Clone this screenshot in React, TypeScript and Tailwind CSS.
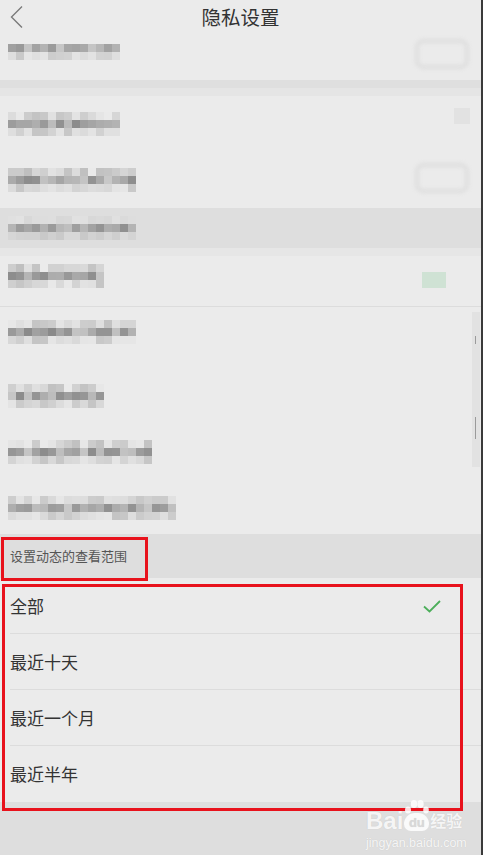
import React from 'react';

const cjk = { fontFamily: '"Noto Sans CJK SC", "Noto Sans", sans-serif' };

// pixelated (mosaic) placeholder for the blurred text in the screenshot
const Mosaic: React.FC<{ cells: number; seed: number; rows?: [number, number][] }> = ({
  cells,
  seed,
  rows = [
    [190, 236],
    [138, 200],
    [196, 232],
  ],
}) => {
  let s = seed;
  const rand = () => {
    s = (s * 9301 + 49297) % 233280;
    return s / 233280;
  };
  return (
    <div className="flex flex-col">
      {rows.map(([lo, hi], r) => (
        <div key={r} className="flex">
          {Array.from({ length: cells }).map((_, c) => {
            const v = Math.round(lo + rand() * (hi - lo));
            return <div key={c} className="w-[8px] h-[8px]" style={{ backgroundColor: `rgb(${v},${v},${v})` }} />;
          })}
        </div>
      ))}
    </div>
  );
};

const GhostToggle = () => (
  <div className="w-[56px] h-[32px] rounded-[10px] border-[6px] border-[#e2e2e2] blur-[1.5px]" />
);

const BlurRow: React.FC<{ cells: number; seed: number; h: string; pt: string; right?: React.ReactNode; line?: boolean }> = ({
  cells,
  seed,
  h,
  pt,
  right,
  line,
}) => (
  <div className={`${h} flex items-start justify-between pl-[8px] pr-[11px] ${line ? 'border-b border-[#dcdcdc]' : ''}`}>
    <div className={pt}>
      <Mosaic cells={cells} seed={seed} />
    </div>
    {right}
  </div>
);

const options = ['全部', '最近十天', '最近一个月', '最近半年'];

export default function App() {
  return (
    <div className="relative w-[483px] h-[855px] overflow-hidden bg-[#ebebeb] border-r-2 border-[#3a3a3a]" style={cjk}>
      {/* header */}
      <div className="relative h-[40px] flex items-center justify-center">
        <svg className="absolute left-[9px] top-[5px]" width="16" height="24" viewBox="0 0 16 24">
          <path d="M13 1.5 L2.5 12 L13 22.5" fill="none" stroke="#7a7a7a" strokeWidth="1.4" />
        </svg>
        <span className="text-[19.5px] text-[#333] -mt-[6px]">隐私设置</span>
      </div>

      {/* first (cut) row */}
      <div className="h-[40px] flex items-start justify-between pl-[8px] pr-[11px] pt-[4px]">
        <Mosaic cells={14} seed={3} rows={[[140, 200], [200, 232]]} />
        <div className="-mt-[6px]">
          <GhostToggle />
        </div>
      </div>
      <div className="h-[8px] bg-[#dfdfdf]" />
      <div className="h-[8px] bg-[#e5e5e5]" />

      <BlurRow h="h-[56px]" pt="pt-[16px]" cells={14} seed={11} right={<div className="w-[16px] h-[16px] bg-[#e2e2e2] mt-[12px]" />} />
      <BlurRow h="h-[56px]" pt="pt-[16px]" cells={16} seed={27} right={<div className="mt-[10px]"><GhostToggle /></div>} />

      {/* section */}
      <div className="h-[40px] bg-[#dedede] flex items-center pl-[8px]">
        <Mosaic cells={16} seed={41} rows={[[214, 226], [140, 196], [200, 218]]} />
      </div>
      <div className="h-[8px] bg-[#e6e6e6]" />

      <BlurRow
        h="h-[51px]"
        pt="pt-[8px]"
        cells={12}
        seed={53}
        line
        right={<div className="w-[24px] h-[16px] bg-[#cfe2d4] mr-[24px] mt-[16px]" />}
      />
      <BlurRow h="h-[56px]" pt="pt-[13px]" cells={16} seed={67} />
      <BlurRow h="h-[56px]" pt="pt-[21px]" cells={12} seed={79} />
      <BlurRow h="h-[56px]" pt="pt-[21px]" cells={18} seed={91} />
      <BlurRow h="h-[59px]" pt="pt-[21px]" cells={21} seed={103} />

      {/* scrollbar ghost */}
      <div className="absolute left-[472px] top-[312px] w-[8px] h-[155px] bg-[#e2e2e2]">
        <div className="ml-[3px] mt-[24px] w-[1px] h-[8px] bg-[#9a9a9a]" />
        <div className="ml-[3px] mt-[73px] w-[1px] h-[22px] bg-[#9a9a9a]" />
      </div>

      {/* range section */}
      <div className="h-[44px] bg-[#dedede] flex items-center pl-[10px] text-[13px] text-[#555]">
        设置动态的查看范围
      </div>
      <div>
        {options.map((o, i) => (
          <div key={o} className="h-[56px] flex items-center justify-between pl-[10px] pr-[40px] relative">
            <span className="text-[17px] text-[#333]">{o}</span>
            {i === 0 && (
              <svg width="18" height="13" viewBox="0 0 18 13">
                <path d="M1 6.5 L6.5 11.5 L17 1" fill="none" stroke="#4cae5a" strokeWidth="1.8" />
              </svg>
            )}
            {i < options.length - 1 && <div className="absolute left-[10px] right-0 bottom-0 h-px bg-[#dcdcdc]" />}
          </div>
        ))}
      </div>
      <div className="h-[60px] bg-[#dedede]" />

      {/* annotation boxes */}
      <div className="absolute left-[1px] top-[537px] w-[147px] h-[44px] border-[3px] border-[#e8121c]" />
      <div className="absolute left-[2px] top-[584px] w-[461px] h-[227px] border-[3px] border-[#e8121c]" />

      {/* watermark */}
      <div
        className="absolute left-[366px] top-[809px] text-white/85 [text-shadow:0_0_1px_rgba(0,0,0,0.15)]"
        style={{ fontFamily: '"Liberation Sans", "Noto Sans CJK SC", sans-serif' }}
      >
        <div className="flex items-end h-[24px]">
          <span className="text-[24px] font-bold leading-[24px]">Bai</span>
          <div className="relative w-[25px] h-[19px] ml-[1px] mb-[2px]">
            <svg className="absolute left-0 -top-[13px]" width="25" height="15" viewBox="0 0 25 15">
              <ellipse cx="4" cy="11" rx="3" ry="3.5" fill="rgba(255,255,255,0.85)" />
              <ellipse cx="10" cy="5" rx="3.2" ry="4" fill="rgba(255,255,255,0.85)" />
              <ellipse cx="16.5" cy="5" rx="3.2" ry="4" fill="rgba(255,255,255,0.85)" />
              <ellipse cx="22" cy="11" rx="2.8" ry="3.4" fill="rgba(255,255,255,0.85)" />
            </svg>
            <span className="absolute left-0 bottom-0 w-[25px] h-[18px] rounded-t-[11px] rounded-b-[7px] bg-white/85 text-[#d8d8d8] text-[13px] leading-none font-bold flex items-center justify-center">
              du
            </span>
          </div>
          <span className="text-[16px] leading-none font-bold ml-[1px] mb-[3px]">经验</span>
        </div>
        <div className="text-[12.5px] leading-none mt-[4px]">jingyan.baidu.com</div>
      </div>
    </div>
  );
}
